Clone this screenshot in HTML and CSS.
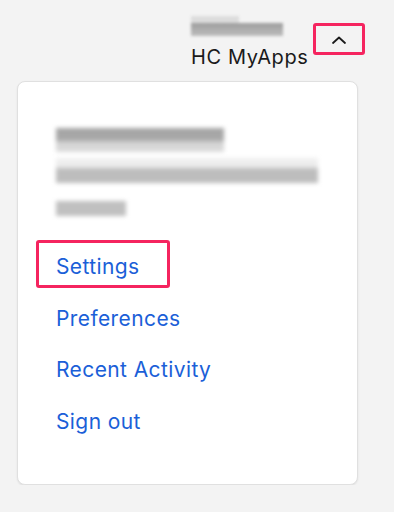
FILE: index.html
```html
<!DOCTYPE html>
<html>
<head>
<meta charset="utf-8">
<link rel="stylesheet" href="styles.css">
</head>
<body>
<header class="topbar">
  <div class="account">
    <div class="blur-name"><span class="bn1"></span><span class="bn2"></span></div>
    <div class="app-name">HC MyApps</div>
  </div>
  <button class="toggle" aria-label="Collapse">
    <svg width="16" height="10" viewBox="0 0 16 10"><path d="M2 8 L8 2.5 L14 8" fill="none" stroke="#1a1a1a" stroke-width="1.8" stroke-linecap="round" stroke-linejoin="round"/></svg>
  </button>
</header>
<main class="card">
  <div class="profile">
    <div class="blur b1"></div>
    <div class="blur b2"></div>
    <div class="blur b3"></div>
  </div>
  <nav class="links">
    <a class="link highlighted" href="#">Settings</a>
    <a class="link" href="#">Preferences</a>
    <a class="link" href="#">Recent Activity</a>
    <a class="link" href="#">Sign out</a>
  </nav>
</main>
</body>
</html>
```
FILE: styles.css
```css
html, body {
  margin: 0;
  padding: 0;
  background: #f3f3f3;
  font-family: Inter, "Noto Sans", sans-serif;
}
.topbar {
  display: flex;
  justify-content: flex-end;
  align-items: flex-start;
  padding: 16px 29px 0 0;
  height: 65px;
  box-sizing: border-box;
}
.account {
  display: flex;
  flex-direction: column;
  width: 122px;
}
.blur-name {
  display: flex;
  flex-direction: column;
  height: 20px;
  width: 92px;
  filter: blur(1.5px);
}
.bn1 {
  height: 7px;
  width: 48px;
  background: #dcdcdc;
}
.bn2 {
  height: 13px;
  width: 92px;
  background: linear-gradient(to bottom, #9d9d9d, #bdbdbd);
}
.app-name {
  font-size: 20px;
  color: #1a1a1a;
  line-height: 24px;
  margin-top: 9px;
  letter-spacing: 0.6px;
}
.toggle {
  width: 52px;
  height: 32px;
  margin-top: 7px;
  border: 3px solid #f5245f;
  border-radius: 3px;
  background: #f3f3f3;
  display: flex;
  align-items: center;
  justify-content: center;
  padding: 0;
  box-sizing: border-box;
}
.toggle svg { display: block; margin-top: 2px; }
.card {
  margin: 16px 0 0 17px;
  width: 341px;
  height: 404px;
  box-sizing: border-box;
  background: #ffffff;
  border: 1px solid #e0e0e0;
  border-radius: 8px;
  box-shadow: 0 1px 2px rgba(0,0,0,0.08);
  padding: 46px 0 0 18px;
}
.profile {
  display: flex;
  flex-direction: column;
  padding-left: 20px;
}
.blur { filter: blur(2px); }
.b1 {
  width: 168px;
  height: 24px;
  background: linear-gradient(to bottom, #a4a4a4 0, #a9a9a9 50%, #d4d4d4 60%, #dcdcdc 100%);
}
.b2 {
  margin-top: 6px;
  width: 262px;
  height: 25px;
  background: linear-gradient(to bottom, #f0f0f0 0, #ececec 35%, #bdbdbd 45%, #bdbdbd 100%);
}
.b3 {
  margin-top: 18px;
  width: 70px;
  height: 15px;
  background: #c0c0c0;
}
.links {
  display: flex;
  flex-direction: column;
  align-items: flex-start;
  margin-top: 24px;
}
.link {
  font-size: 21px;
  color: #1b5fd8;
  text-decoration: none;
  line-height: 24px;
  letter-spacing: 0.4px;
  padding: 12px 27px 6px 17px;
  margin-bottom: 3.6px;
  border: 3px solid transparent;
  border-radius: 3px;
}
.highlighted {
  border-color: #f5245f;
}
```
